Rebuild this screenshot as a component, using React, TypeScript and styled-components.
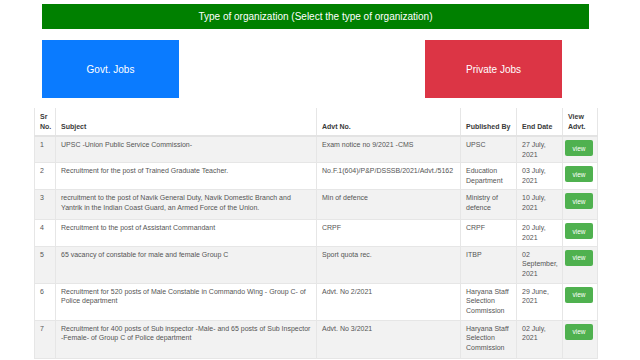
import styled, { createGlobalStyle } from "styled-components";

const GlobalStyle = createGlobalStyle`
  body {
    margin: 0;
    background: #ffffff;
    font-family: "Liberation Sans", Arial, sans-serif;
    color: #3a3a3a;
  }
`;

const Page = styled.div`
  width: 640px;
  height: 360px;
  overflow: hidden;
  padding-top: 4px;
  box-sizing: border-box;
`;

const TypeBar = styled.div`
  margin: 0 51px 0 42px;
  height: 25px;
  background: #008000;
  color: #ffffff;
  font-size: 10px;
  display: flex;
  align-items: center;
  justify-content: center;
`;

const OrgRow = styled.div`
  display: flex;
  justify-content: space-between;
  margin: 11px 78px 0 42px;
`;

const OrgButton = styled.div<{ $tone: "blue" | "red" }>`
  width: 137px;
  height: 58px;
  display: flex;
  align-items: center;
  justify-content: center;
  color: #ffffff;
  font-size: 10px;
  background: ${(p) => (p.$tone === "blue" ? "#0a7bff" : "#dc3545")};
`;

const Table = styled.table`
  margin: 10px 0 0 34px;
  width: 563px;
  border-collapse: collapse;
  table-layout: fixed;
  font-size: 7px;
  line-height: 9.6px;

  th,
  td {
    box-sizing: border-box;
  }
`;

const Th = styled.th<{ $w: number }>`
  width: ${(p) => p.$w}px;
  text-align: left;
  vertical-align: bottom;
  font-weight: bold;
  color: #3a3a3a;
  padding: 4px 3px 4px 5px;
  border: 1px solid #e6e6e6;
  border-top: none;
  border-bottom: 2px solid #e3e3e3;
`;

const Tr = styled.tr<{ $striped: boolean; $h: number }>`
  height: ${(p) => p.$h}px;
  background: ${(p) => (p.$striped ? "#f2f2f2" : "#ffffff")};
`;

const Td = styled.td`
  vertical-align: top;
  padding: 3px 3px 3px 5px;
  border: 1px solid #e6e6e6;
  color: #555555;
`;

const ViewCell = styled.td`
  vertical-align: top;
  padding: 3px 3px 0 2px;
  border: 1px solid #e6e6e6;
`;

const ViewButton = styled.button`
  width: 28px;
  height: 16px;
  padding: 0;
  border: none;
  border-radius: 2px;
  background: #4fb14f;
  color: #ffffff;
  font-family: "Liberation Sans", Arial, sans-serif;
  font-size: 6.5px;
`;

const rows = [
  {
    no: "1",
    subject: "UPSC -Union Public Service Commission-",
    advt: "Exam notice no 9/2021 -CMS",
    by: "UPSC",
    end: "27 July, 2021",
    h: 26,
  },
  {
    no: "2",
    subject: "Recruitment for the post of Trained Graduate Teacher.",
    advt: "No.F.1(604)/P&P/DSSSB/2021/Advt./5162",
    by: "Education Department",
    end: "03 July, 2021",
    h: 27,
  },
  {
    no: "3",
    subject:
      "recruitment to the post of Navik General Duty, Navik Domestic Branch and Yantrik in the Indian Coast Guard, an Armed Force of the Union.",
    advt: "Min of defence",
    by: "Ministry of defence",
    end: "10 July, 2021",
    h: 30,
  },
  {
    no: "4",
    subject: "Recruitment to the post of Assistant Commandant",
    advt: "CRPF",
    by: "CRPF",
    end: "20 July, 2021",
    h: 26,
  },
  {
    no: "5",
    subject: "65 vacancy of constable for male and female Group C",
    advt: "Sport quota rec.",
    by: "ITBP",
    end: "02 September, 2021",
    h: 37,
  },
  {
    no: "6",
    subject:
      "Recruitment for 520 posts of Male Constable in Commando Wing - Group C- of Police department",
    advt: "Advt. No 2/2021",
    by: "Haryana Staff Selection Commission",
    end: "29 June, 2021",
    h: 37,
  },
  {
    no: "7",
    subject:
      "Recruitment for 400 posts of Sub inspector -Male- and 65 posts of Sub Inspector -Female- of Group C of Police department",
    advt: "Advt. No 3/2021",
    by: "Haryana Staff Selection Commission",
    end: "02 July, 2021",
    h: 38,
  },
];

export default function App() {
  return (
    <Page>
      <GlobalStyle />
      <TypeBar>Type of organization (Select the type of organization)</TypeBar>
      <OrgRow>
        <OrgButton $tone="blue">Govt. Jobs</OrgButton>
        <OrgButton $tone="red">Private Jobs</OrgButton>
      </OrgRow>
      <Table>
        <thead>
          <tr>
            <Th $w={21}>
              Sr
              <br />
              No.
            </Th>
            <Th $w={261}>Subject</Th>
            <Th $w={144}>Advt No.</Th>
            <Th $w={56}>Published By</Th>
            <Th $w={46}>End Date</Th>
            <Th $w={35}>
              View
              <br />
              Advt.
            </Th>
          </tr>
        </thead>
        <tbody>
          {rows.map((r, i) => (
            <Tr key={r.no} $striped={i % 2 === 0} $h={r.h}>
              <Td>{r.no}</Td>
              <Td>{r.subject}</Td>
              <Td>{r.advt}</Td>
              <Td>{r.by}</Td>
              <Td>{r.end}</Td>
              <ViewCell>
                <ViewButton>view</ViewButton>
              </ViewCell>
            </Tr>
          ))}
        </tbody>
      </Table>
    </Page>
  );
}
